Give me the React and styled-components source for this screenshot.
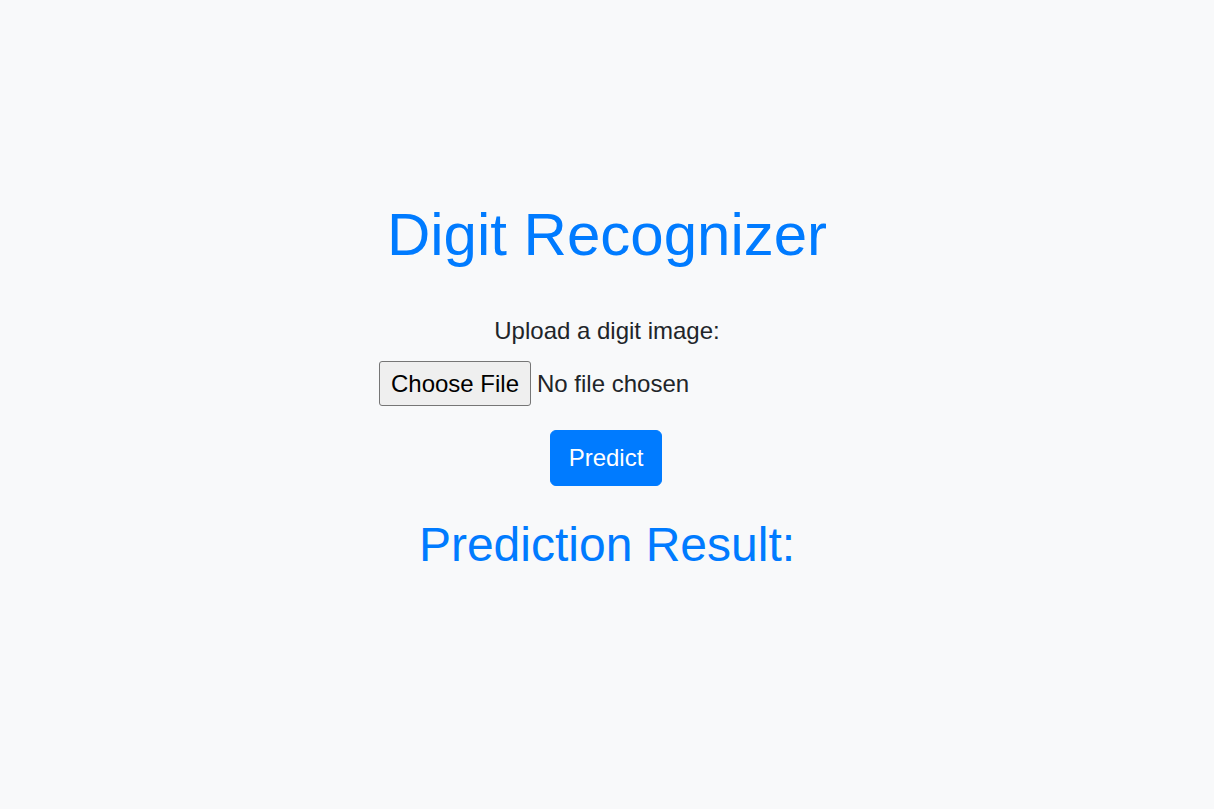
import React from "react";
import styled, { createGlobalStyle } from "styled-components";

const Global = createGlobalStyle`
  * { box-sizing: border-box; }
  html, body { margin: 0; padding: 0; }
  body {
    background: #f8f9fa;
    font-family: "Liberation Sans", Arial, sans-serif;
    color: #212529;
    font-size: 24px;
    line-height: 1.5;
  }
`;

const Page = styled.main`
  min-height: 809px;
  padding-top: 199px;
  display: flex;
  flex-direction: column;
  align-items: center;
`;

const Title = styled.h1`
  margin: 0 0 42px;
  font-size: 60px;
  line-height: 1.2;
  font-weight: 400;
  color: #007bff;
`;

const Form = styled.form`
  display: flex;
  flex-direction: column;
  align-items: center;
`;

const Label = styled.label`
  font-size: 24px;
  line-height: 36px;
  color: #212529;
  margin-bottom: 12px;
`;

const FileInput = styled.input`
  width: 456px;
  height: 45px;
  margin: 0 0 24px;
  font-family: "Liberation Sans", Arial, sans-serif;
  font-size: 24px;
  color: #212529;
  padding: 0;

  &::file-selector-button {
    font-family: "Liberation Sans", Arial, sans-serif;
    font-size: 24px;
    height: 45px;
    width: 152px;
    padding: 0;
    margin: 0 6px 0 0;
    color: #000;
    background: #efefef;
    border: 1px solid #767676;
    border-radius: 3px;
  }
`;

const Button = styled.button`
  font-family: "Liberation Sans", Arial, sans-serif;
  font-size: 24px;
  line-height: 36px;
  height: 56px;
  width: 112px;
  padding: 0;
  margin-right: 2px;
  color: #fff;
  background: #007bff;
  border: 1px solid #007bff;
  border-radius: 6px;
  cursor: pointer;
`;

const Result = styled.h2`
  margin: 30px 0 0;
  font-size: 48px;
  line-height: 1.2;
  font-weight: 400;
  color: #007bff;
`;

export default function App() {
  return (
    <>
      <Global />
      <Page>
        <Title>Digit Recognizer</Title>
        <Form onSubmit={(e) => e.preventDefault()}>
          <Label htmlFor="file">Upload a digit image:</Label>
          <FileInput id="file" type="file" accept="image/*" />
          <Button type="submit">Predict</Button>
        </Form>
        <Result>Prediction Result:</Result>
      </Page>
    </>
  );
}
